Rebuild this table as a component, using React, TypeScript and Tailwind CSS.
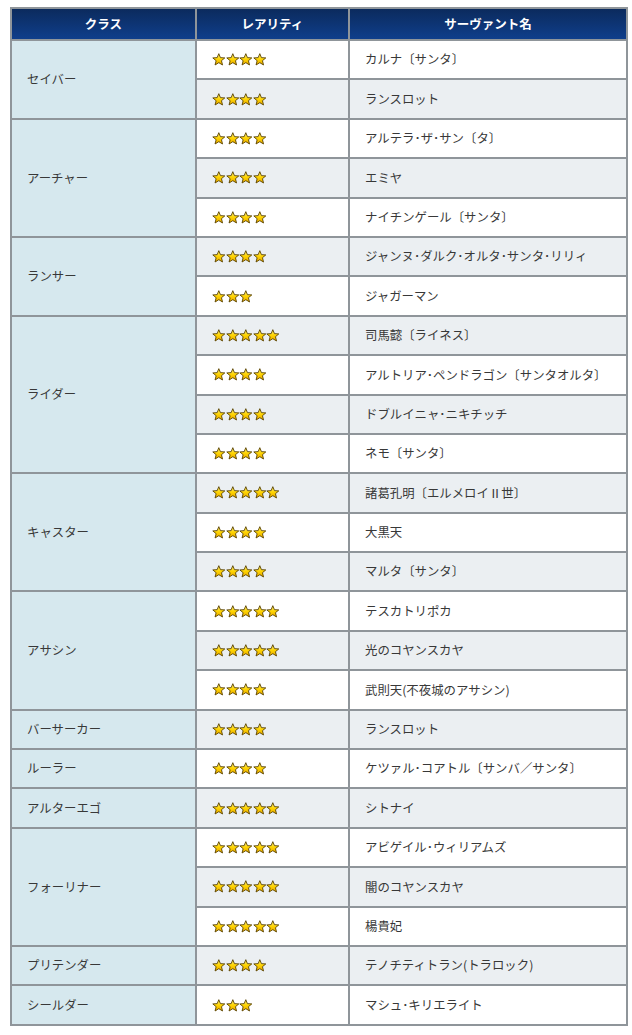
import React from "react";

type Row = { stars: number; name: string };
type Group = { cls: string; rows: Row[] };

const data: Group[] = [
  { cls: "セイバー", rows: [{ stars: 4, name: "カルナ〔サンタ〕" }, { stars: 4, name: "ランスロット" }] },
  {
    cls: "アーチャー",
    rows: [
      { stars: 4, name: "アルテラ･ザ･サン〔タ〕" },
      { stars: 4, name: "エミヤ" },
      { stars: 4, name: "ナイチンゲール〔サンタ〕" },
    ],
  },
  {
    cls: "ランサー",
    rows: [
      { stars: 4, name: "ジャンヌ･ダルク･オルタ･サンタ･リリィ" },
      { stars: 3, name: "ジャガーマン" },
    ],
  },
  {
    cls: "ライダー",
    rows: [
      { stars: 5, name: "司馬懿〔ライネス〕" },
      { stars: 4, name: "アルトリア･ペンドラゴン〔サンタオルタ〕" },
      { stars: 4, name: "ドブルイニャ･ニキチッチ" },
      { stars: 4, name: "ネモ〔サンタ〕" },
    ],
  },
  {
    cls: "キャスター",
    rows: [
      { stars: 5, name: "諸葛孔明〔エルメロイⅡ世〕" },
      { stars: 4, name: "大黒天" },
      { stars: 4, name: "マルタ〔サンタ〕" },
    ],
  },
  {
    cls: "アサシン",
    rows: [
      { stars: 5, name: "テスカトリポカ" },
      { stars: 5, name: "光のコヤンスカヤ" },
      { stars: 4, name: "武則天(不夜城のアサシン)" },
    ],
  },
  { cls: "バーサーカー", rows: [{ stars: 4, name: "ランスロット" }] },
  { cls: "ルーラー", rows: [{ stars: 4, name: "ケツァル･コアトル〔サンバ／サンタ〕" }] },
  { cls: "アルターエゴ", rows: [{ stars: 5, name: "シトナイ" }] },
  {
    cls: "フォーリナー",
    rows: [
      { stars: 5, name: "アビゲイル･ウィリアムズ" },
      { stars: 5, name: "闇のコヤンスカヤ" },
      { stars: 5, name: "楊貴妃" },
    ],
  },
  { cls: "プリテンダー", rows: [{ stars: 4, name: "テノチティトラン(トラロック)" }] },
  { cls: "シールダー", rows: [{ stars: 3, name: "マシュ･キリエライト" }] },
];

function Star() {
  return (
    <svg width="13.6" height="13" viewBox="0 0 24 23" className="block">
      <defs>
        <linearGradient id="sg" x1="0" y1="0" x2="0" y2="1">
          <stop offset="0" stopColor="#fff27a" />
          <stop offset="0.5" stopColor="#ffd400" />
          <stop offset="1" stopColor="#e9a800" />
        </linearGradient>
      </defs>
      <path
        d="M12 1.2 L14.9 8.2 L22.6 8.7 L16.7 13.6 L18.6 21.2 L12 17.1 L5.4 21.2 L7.3 13.6 L1.4 8.7 L9.1 8.2 Z"
        fill="url(#sg)"
        stroke="#5a4200"
        strokeWidth="1.6"
        strokeLinejoin="round"
      />
    </svg>
  );
}

function Stars({ n }: { n: number }) {
  return (
    <div className="flex">
      {Array.from({ length: n }).map((_, i) => (
        <Star key={i} />
      ))}
    </div>
  );
}

export default function App() {
  let idx = 0;
  return (
    <div
      className="w-[632px] h-[1035px] bg-white pt-[7px] pl-[10px]"
      style={{ fontFamily: '"Noto Sans CJK JP", "Noto Sans", sans-serif' }}
    >
      <table className="border-collapse table-fixed w-[616px] text-[12.4px] text-[#383838]">
        <colgroup>
          <col className="w-[185px]" />
          <col className="w-[153px]" />
          <col className="w-[278px]" />
        </colgroup>
        <thead>
          <tr className="h-[32px] bg-gradient-to-b from-[#0b2a5c] to-[#0f3f8d]">
            <th className="border-2 border-[#8f959a] text-white font-bold text-[12.5px] text-center">クラス</th>
            <th className="border-2 border-[#8f959a] text-white font-bold text-[12.5px] text-center">レアリティ</th>
            <th className="border-2 border-[#8f959a] text-white font-bold text-[12.5px] text-center">サーヴァント名</th>
          </tr>
        </thead>
        <tbody>
          {data.map((g) =>
            g.rows.map((r, j) => {
              idx++;
              const bg = idx % 2 === 1 ? "bg-white" : "bg-[#ebeff2]";
              return (
                <tr key={`${g.cls}-${j}`} className="h-[39.4px]">
                  {j === 0 && (
                    <td
                      rowSpan={g.rows.length}
                      className="border-2 border-[#8f959a] bg-[#d6e8ee] pl-[15px] align-middle"
                    >
                      {g.cls}
                    </td>
                  )}
                  <td className={`border-2 border-[#8f959a] ${bg} pl-[15px] align-middle`}>
                    <Stars n={r.stars} />
                  </td>
                  <td className={`border-2 border-[#8f959a] ${bg} pl-[15px] align-middle`}>{r.name}</td>
                </tr>
              );
            })
          )}
        </tbody>
      </table>
    </div>
  );
}
